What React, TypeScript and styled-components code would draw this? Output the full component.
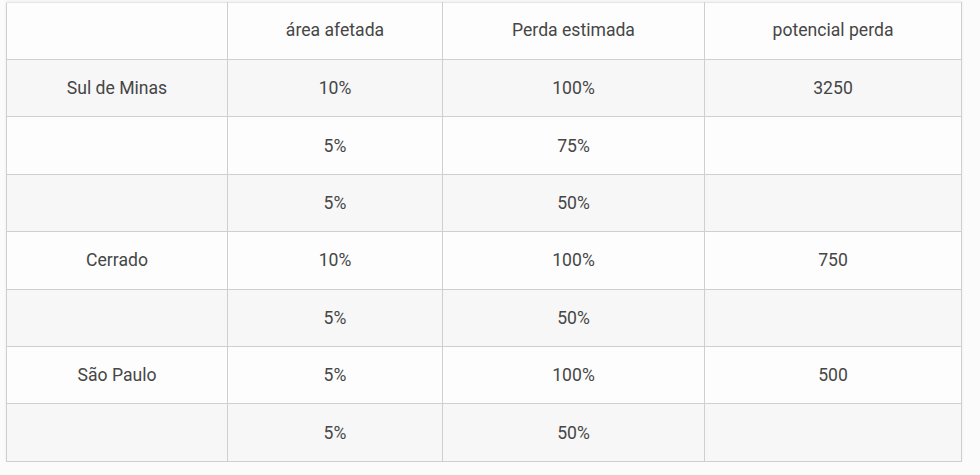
import React from "react"
import styled, { createGlobalStyle } from "styled-components"

const GlobalStyle = createGlobalStyle`
  html, body {
    margin: 0;
    padding: 0;
    background: #fbfbfb;
  }
`

const Page = styled.div`
  padding: 2px 18px 0 6px;
  font-family: Roboto, "Liberation Sans", sans-serif;
`

const Table = styled.table`
  width: 956px;
  table-layout: fixed;
  border-collapse: collapse;
  box-shadow: 0 -1px 3px rgba(0, 0, 0, 0.06);
  border: 1px solid #dcdcdc;
`

const Row = styled.tr<{ $shaded?: boolean }>`
  background: ${(p) => (p.$shaded ? "#f7f7f7" : "#fdfdfd")};
`

const Cell = styled.td`
  height: 56.4px;
  padding: 0;
  border: 1px solid #cfcfcf;
  text-align: center;
  vertical-align: middle;
  font-size: 17.6px;
  color: #464646;
`

const HeadCell = styled(Cell).attrs({ as: "th" })`
  height: 54px;
  font-weight: 400;
  padding-bottom: 2px;
  border-top-color: #e6e6e6;
`

interface IRow {
  region: string
  area: string
  loss: string
  potential: string
}

const rows: IRow[] = [
  { region: "Sul de Minas", area: "10%", loss: "100%", potential: "3250" },
  { region: "", area: "5%", loss: "75%", potential: "" },
  { region: "", area: "5%", loss: "50%", potential: "" },
  { region: "Cerrado", area: "10%", loss: "100%", potential: "750" },
  { region: "", area: "5%", loss: "50%", potential: "" },
  { region: "São Paulo", area: "5%", loss: "100%", potential: "500" },
  { region: "", area: "5%", loss: "50%", potential: "" },
]

const App = () => (
  <Page>
    <GlobalStyle />
    <Table>
      <colgroup>
        <col style={{ width: 221 }} />
        <col style={{ width: 215 }} />
        <col style={{ width: 262 }} />
        <col style={{ width: 257 }} />
      </colgroup>
      <thead>
        <Row>
          <HeadCell />
          <HeadCell>área afetada</HeadCell>
          <HeadCell>Perda estimada</HeadCell>
          <HeadCell>potencial perda</HeadCell>
        </Row>
      </thead>
      <tbody>
        {rows.map((r, i) => (
          <Row key={i} $shaded={i % 2 === 0}>
            <Cell>{r.region}</Cell>
            <Cell>{r.area}</Cell>
            <Cell>{r.loss}</Cell>
            <Cell>{r.potential}</Cell>
          </Row>
        ))}
      </tbody>
    </Table>
  </Page>
)

export default App
